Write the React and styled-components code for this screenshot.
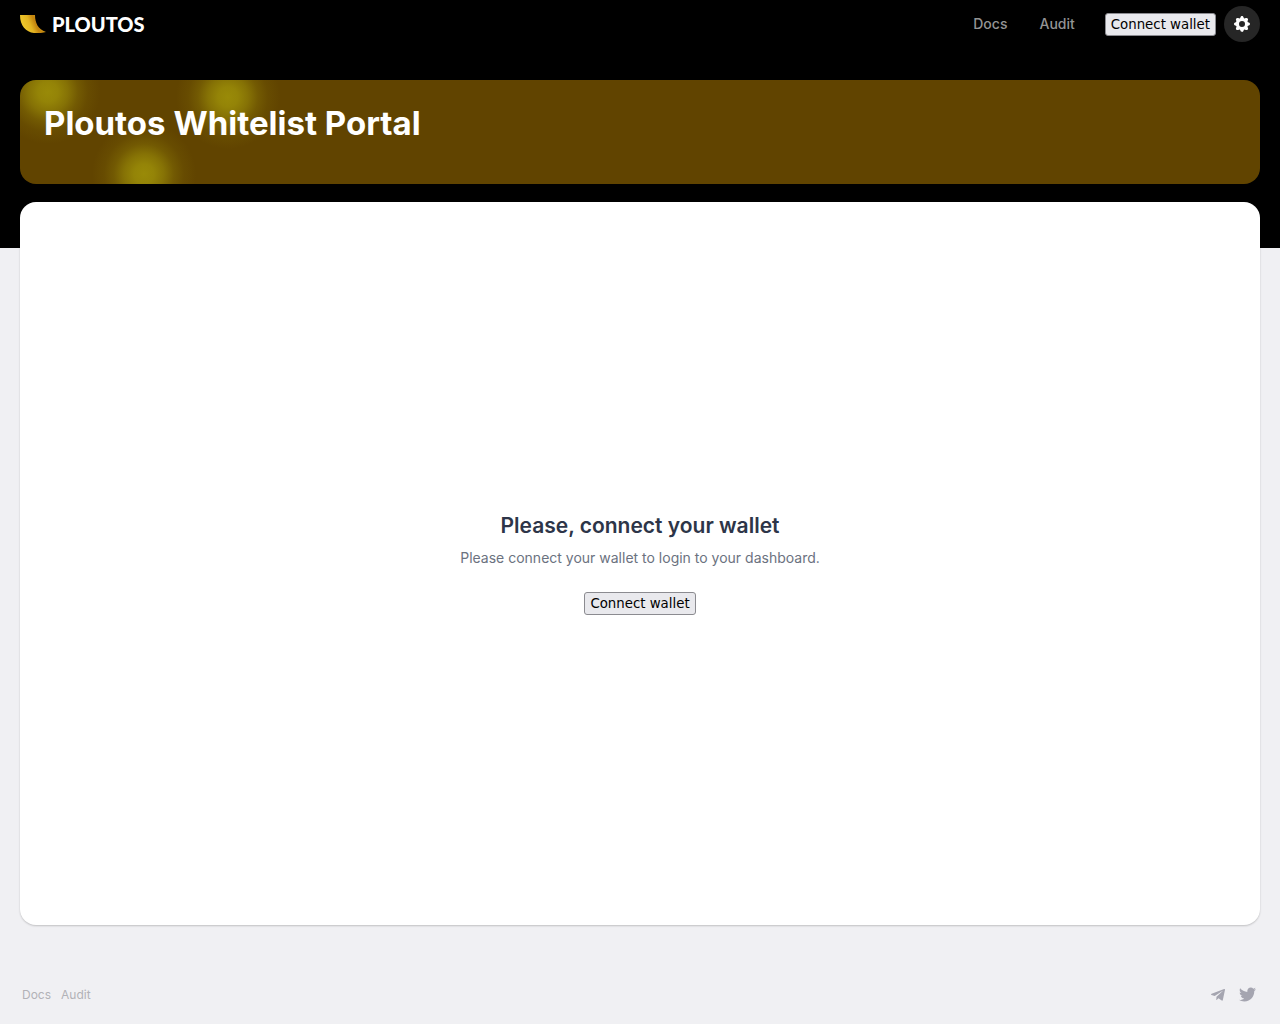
import styled, { createGlobalStyle } from 'styled-components';
import { HiCog } from 'react-icons/hi';
import { FaTelegramPlane, FaTwitter } from 'react-icons/fa';

const links = ['Docs', 'Audit'];

const App = () => {
  return (
    <>
      <GlobalStyle />
      <Page>
        <Top>
          <Header>
            <Brand href="#">
              <LogoMark />
              PLOUTOS
            </Brand>
            <Nav>
              {links.map(el => (
                <NavLink key={el} href="#">
                  {el}
                </NavLink>
              ))}
            </Nav>
            <Actions>
              <WalletButton>Connect wallet</WalletButton>
              <SettingsButton aria-label="Settings">
                <HiCog size={20} />
              </SettingsButton>
            </Actions>
          </Header>
          <Banner>
            <Title>Ploutos Whitelist Portal</Title>
          </Banner>
        </Top>
        <Card>
          <Heading>Please, connect your wallet</Heading>
          <Message>Please connect your wallet to login to your dashboard.</Message>
          <WalletButton>Connect wallet</WalletButton>
        </Card>
        <Footer>
          <FooterGroup gap="10px">
            {links.map(el => (
              <FooterLink key={el} href="#">
                {el}
              </FooterLink>
            ))}
          </FooterGroup>
          <FooterGroup gap="13px">
            <SocialLink href="#" aria-label="Telegram">
              <FaTelegramPlane size={16} />
            </SocialLink>
            <SocialLink href="#" aria-label="Twitter">
              <FaTwitter size={17} />
            </SocialLink>
          </FooterGroup>
        </Footer>
      </Page>
    </>
  );
};

const LogoMark = () => (
  <svg width="26" height="18" viewBox="0 0 26 18" aria-hidden="true">
    <defs>
      <linearGradient id="horn" x1="0" y1="0.3" x2="1" y2="0">
        <stop offset="0" stopColor="#efc92c" />
        <stop offset="0.3" stopColor="#e3b422" />
        <stop offset="0.5" stopColor="#c4850f" />
        <stop offset="1" stopColor="#d6a51c" />
      </linearGradient>
    </defs>
    <path d="M0 0H15C15 8 18 14 26 17C23 18 19 18 14 18C6 17 0 11 0 0Z" fill="url(#horn)" />
  </svg>
);

const GlobalStyle = createGlobalStyle`
  * {
    box-sizing: border-box;
  }
  body {
    margin: 0;
    background: #f0f0f3;
    font-family: Inter, sans-serif;
  }
  a {
    text-decoration: none;
  }
`;

const Page = styled.div`
  display: flex;
  flex-direction: column;
  min-height: 100vh;
`;

const Top = styled.div`
  height: 248px;
  padding: 0 20px;
  background: black;
`;

const Header = styled.header`
  display: flex;
  align-items: center;
  height: 48px;
`;

const Brand = styled.a`
  display: flex;
  align-items: center;
  gap: 6px;
  margin-right: auto;
  color: white;
  font: 900 20px/24px Lato, sans-serif;
`;

const Nav = styled.nav`
  display: flex;
  gap: 32px;
  margin-right: 30px;
`;

const NavLink = styled.a`
  color: #949494;
  font-size: 14px;
  font-weight: 500;
  line-height: 20px;
`;

const Actions = styled.div`
  display: flex;
  align-items: center;
  gap: 8px;
`;

const WalletButton = styled.button`
  height: 23px;
  padding: 0 5px;
  border: 1px solid #8b8b90;
  border-radius: 3px;
  background: #e9e9ed;
  color: black;
  font-family: 'DejaVu Sans', sans-serif;
`;

const SettingsButton = styled.button`
  display: flex;
  align-items: center;
  justify-content: center;
  width: 36px;
  height: 36px;
  padding: 0;
  border: 0;
  border-radius: 50%;
  background: #262626;
  color: white;
`;

const glow = (x, y) =>
  `radial-gradient(circle at ${x} ${y}, #998a08 0, #998a08e8 10px, #998a08a8 20px, #998a0850 30px, #998a081c 40px, #998a0800 52px)`;

const Banner = styled.section`
  height: 104px;
  margin-top: 32px;
  padding: 24px;
  border-radius: 16px;
  background: ${glow('28px', '12px')}, ${glow('208px', '17px')},
    ${glow('124px', '94px')}, #614400;
`;

const Title = styled.h1`
  margin: 0;
  color: white;
  font-size: 33px;
  font-weight: 700;
  line-height: 38px;
`;

const Card = styled.main`
  display: flex;
  flex: 1;
  flex-direction: column;
  align-items: center;
  justify-content: center;
  margin: -46px 20px 0;
  border-radius: 16px;
  background: white;
  box-shadow: 0 1px 2px rgba(0, 0, 0, 0.2);
`;

const Heading = styled.h2`
  margin: 0;
  color: #2d3548;
  font-size: 21px;
  font-weight: 600;
  line-height: 28px;
`;

const Message = styled.p`
  margin: 8px 0 24px;
  color: #6b7280;
  font-size: 14px;
  line-height: 20px;
`;

const Footer = styled.footer`
  display: flex;
  align-items: center;
  justify-content: space-between;
  margin-top: 40px;
  height: 59px;
  padding: 0 24px 0 22px;
`;

const FooterGroup = styled.div`
  display: flex;
  align-items: center;
  gap: ${({ gap }) => gap};
`;

const FooterLink = styled.a`
  color: #b2b2b7;
  font-size: 12px;
  line-height: 16px;
`;

const SocialLink = styled.a`
  display: flex;
  color: #a5a5b0;
`;

export default App;
